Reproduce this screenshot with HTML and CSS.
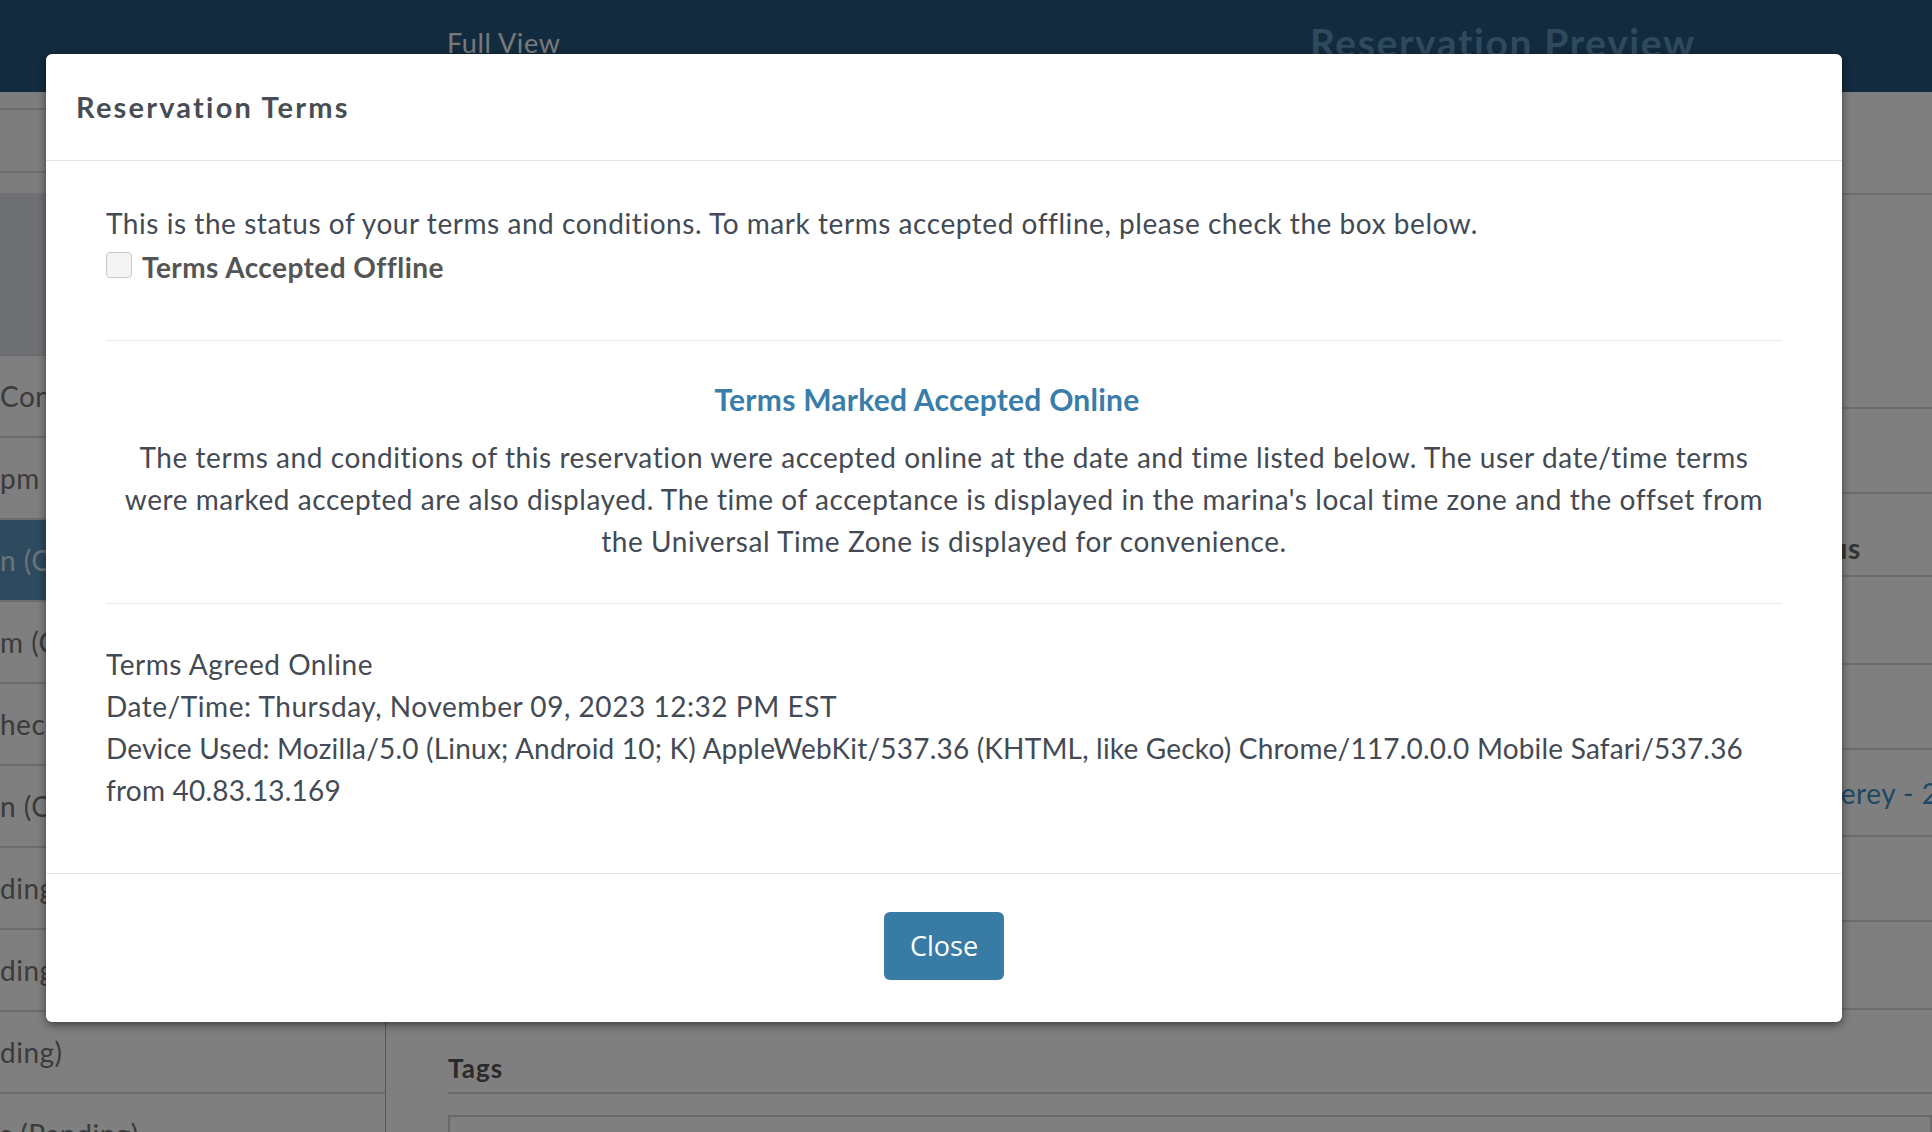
FILE: index.html
```html
<!DOCTYPE html>
<html lang="en">
<head>
<meta charset="utf-8">
<title>Reservation Terms</title>
<link rel="stylesheet" href="styles.css">
</head>
<body>
<div class="page">
  <header class="topbar">
    <span class="tab">Full View</span>
    <span class="page-title">Reservation Preview</span>
  </header>
  <div class="layout">
    <aside class="sidebar">
      <div class="side-strip"></div>
      <div class="side-strip side-strip--tall"></div>
      <div class="side-strip side-strip--short"></div>
      <div class="side-box"></div>
      <ul class="side-list">
        <li>Confirmed</li>
        <li>pm</li>
        <li class="active">n (Confirmed)</li>
        <li>m (Confirmed)</li>
        <li>hecked In</li>
        <li>n (Checked In)</li>
        <li>ding</li>
        <li>ding</li>
        <li>ding)</li>
        <li>s (Pending)</li>
      </ul>
    </aside>
    <main class="main">
      <div class="row row--top"></div>
      <div class="row row--big"></div>
      <div class="row"></div>
      <div class="row row--head"><span></span><span class="col-head">Status</span></div>
      <div class="row row--tall"></div>
      <div class="row"></div>
      <div class="row row--mid"><span></span><span class="col-link">Monterey - 2B</span></div>
      <div class="row"></div>
      <div class="row row--tall"></div>
      <section class="tags">
        <h3 class="tags-title">Tags</h3>
        <div class="tags-box"></div>
      </section>
    </main>
  </div>
</div>

<div class="backdrop"></div>

<div class="modal" role="dialog" aria-labelledby="modal-title">
  <div class="modal-header">
    <h4 class="modal-title" id="modal-title">Reservation Terms</h4>
  </div>
  <div class="modal-body">
    <p class="intro">This is the status of your terms and conditions. To mark terms accepted offline, please check the box below.</p>
    <label class="check-row">
      <input type="checkbox" class="check">
      <span class="check-label">Terms Accepted Offline</span>
    </label>
    <hr class="divider divider--first">
    <h3 class="online-heading">Terms Marked Accepted Online</h3>
    <p class="online-text">The terms and conditions of this reservation were accepted online at the date and time listed below. The user date/time terms<br>were marked accepted are also displayed. The time of acceptance is displayed in the marina's local time zone and the offset from<br>the Universal Time Zone is displayed for convenience.</p>
    <hr class="divider divider--second">
    <div class="agreement">
      <div>Terms Agreed Online</div>
      <div>Date/Time: Thursday, November 09, 2023 12:32 PM EST</div>
      <div class="device">Device Used: Mozilla/5.0 (Linux; Android 10; K) AppleWebKit/537.36 (KHTML, like Gecko) Chrome/117.0.0.0 Mobile Safari/537.36<br>from 40.83.13.169</div>
    </div>
  </div>
  <div class="modal-footer">
    <button type="button" class="btn-close">Close</button>
  </div>
</div>
</body>
</html>
```
FILE: styles.css
```css
* { box-sizing: border-box; }

html, body {
  margin: 0;
  padding: 0;
}

body {
  width: 1932px;
  height: 1132px;
  overflow: hidden;
  position: relative;
  font-family: Lato, "Noto Sans", sans-serif;
  background: #ffffff;
}

/* ---------- underlying page ---------- */
.page {
  width: 1932px;
  height: 1132px;
  display: flex;
  flex-direction: column;
}

.topbar {
  height: 92px;
  flex: none;
  background: #24567c;
  display: grid;
  grid-template-columns: 447px 863px 1fr;
  align-items: center;
  padding-bottom: 8px;
}

.tab {
  grid-column: 2;
  font-size: 27px;
  letter-spacing: 0.6px;
  color: #f2f2f2;
}

.page-title {
  grid-column: 3;
  font-size: 39px;
  letter-spacing: 1.6px;
  font-weight: 700;
  color: #5d94bd;
}

.layout {
  flex: 1;
  display: flex;
  min-height: 0;
}

.sidebar {
  width: 386px;
  flex: none;
  border-right: 1px solid #acacac;
  background: #ffffff;
  overflow: hidden;
}

.side-strip {
  height: 18px;
  border-bottom: 2px solid #d6d9dc;
  background: #fbfbfb;
}

.side-strip--tall { height: 63px; }
.side-strip--short { height: 20px; border-bottom: 0; }

.side-box {
  height: 163px;
  background: #dde1e6;
  border-bottom: 1px solid #cfd3d8;
}

.side-list {
  list-style: none;
  margin: 0;
  padding: 0;
}

.side-list li {
  height: 82px;
  display: flex;
  align-items: center;
  border-bottom: 2px solid #d6d8da;
  font-size: 28px;
  letter-spacing: 0.5px;
  color: #767676;
  white-space: nowrap;
}

.side-list li.active {
  background: #5a94bc;
  color: #d6e6f2;
}

.main {
  flex: 1;
  padding-left: 62px;
  background: #ffffff;
  overflow: hidden;
}

.row {
  height: 85px;
  border-bottom: 2px solid #d6d8da;
  display: grid;
  grid-template-columns: 1332px 1fr;
  align-items: center;
  font-size: 28px;
  letter-spacing: 0.5px;
  white-space: nowrap;
}

.row--top { height: 103px; }
.row--big { height: 214px; }
.row--tall { height: 88px; }
.row--mid { height: 87px; }
.row--head { height: 83px; align-items: end; padding-bottom: 10px; }

.col-head {
  font-weight: 700;
  color: #666;
}

.col-link {
  margin-left: -8px;
  color: #3e8fc4;
}

.tags {
  padding-top: 40px;
}

.tags-title {
  margin: 0;
  font-size: 26px;
  letter-spacing: 1px;
  line-height: 36px;
  font-weight: 700;
  color: #555;
  padding-bottom: 6px;
  border-bottom: 2px solid #cfd2d5;
}

.tags-box {
  margin-top: 21px;
  height: 100px;
  border: 2px solid #cfd2d5;
}

/* ---------- modal ---------- */
.backdrop {
  position: absolute;
  inset: 0;
  background: rgba(0, 0, 0, 0.5);
}

.modal {
  position: absolute;
  left: 46px;
  top: 54px;
  width: 1796px;
  background: #ffffff;
  border-radius: 6px;
  box-shadow: 0 3px 9px rgba(0, 0, 0, 0.5);
  color: #434a54;
}

.modal-header {
  padding: 32px 30px;
  border-bottom: 1px solid #e5e5e5;
}

.modal-title {
  margin: 0;
  font-size: 29px;
  letter-spacing: 2.2px;
  line-height: 42px;
  font-weight: 700;
  color: #484d54;
}

.modal-body {
  padding: 41px 60px 62px;
  font-size: 28px;
  letter-spacing: 0.55px;
  line-height: 42px;
}

.intro {
  margin: 0;
}

.check-row {
  display: flex;
  align-items: center;
  gap: 10px;
  height: 42px;
  margin-top: 2px;
}

.check {
  appearance: none;
  -webkit-appearance: none;
  width: 26px;
  height: 26px;
  margin: 0 0 4px 0;
  border: 1px solid #c9c9c9;
  border-radius: 4px;
  background: #f4f4f4;
}

.check-label {
  font-weight: 700;
  letter-spacing: 0.45px;
  color: #555555;
}

.divider {
  border: 0;
  border-top: 1px solid #eaeaea;
  margin: 52px 0 0;
}

.divider--second {
  margin-top: 41px;
}

.online-heading {
  margin: 37px 0 16px;
  padding-right: 34px;
  text-align: center;
  font-size: 30px;
  letter-spacing: 0.25px;
  line-height: 42px;
  font-weight: 700;
  color: #3a7daa;
}

.online-text {
  margin: 0;
  text-align: center;
}

.agreement {
  margin-top: 39px;
}

.device {
  letter-spacing: 0.2px;
}

.modal-footer {
  border-top: 1px solid #e5e5e5;
  padding: 38px 0 42px;
  text-align: center;
}

.btn-close {
  font-family: "Open Sans", sans-serif;
  font-size: 27px;
  line-height: 44px;
  padding: 12px 26px;
  background: #387ca5;
  color: #ffffff;
  border: 0;
  border-radius: 6px;
}
```
